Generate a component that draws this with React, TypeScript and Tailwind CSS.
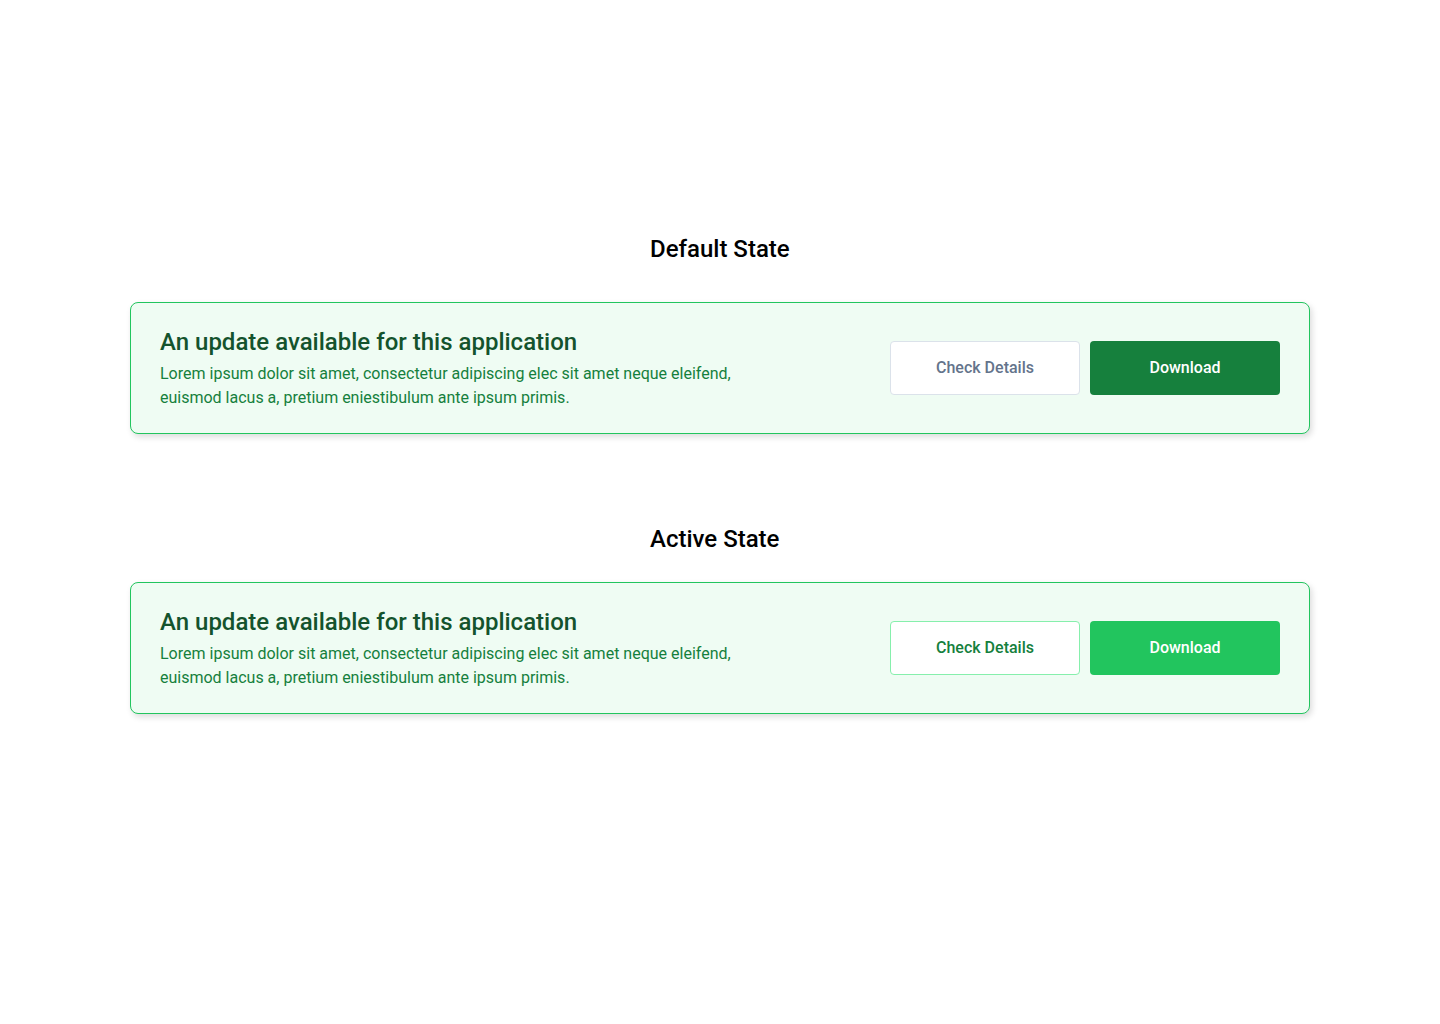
const states = [
  { label: "Default State", active: false, gap: "mt-[37px]" },
  { label: "Active State", active: true, gap: "mt-[27px]" },
];

const UpdateBanner = ({ active }: { active: boolean }) => {
  return (
    <div className="flex items-center justify-between rounded-lg border border-[#22c55e] bg-[#effcf3] px-[29px] pt-[23px] pb-[23px] shadow-[2px_3px_6px_rgba(0,0,0,0.14)]">
      <div className="max-w-[600px]">
        <h2 className="text-[24px] leading-8 font-medium text-[#14532d]">
          An update available for this application
        </h2>
        <p className="mt-1 text-base leading-6 text-[#15803d]">
          Lorem ipsum dolor sit amet, consectetur adipiscing elec sit amet neque eleifend, euismod lacus a, pretium eniestibulum ante ipsum primis.
        </p>
      </div>
      <div className="flex gap-[10px]">
        <button
          className={`h-[54px] w-[190px] rounded border bg-white text-base font-medium ${
            active ? "border-[#86efac] text-[#15803d]" : "border-[#dbe2ea] text-[#64748b]"
          }`}
        >
          Check Details
        </button>
        <button
          className={`h-[54px] w-[190px] rounded text-base font-medium text-white ${
            active ? "bg-[#22c55e]" : "bg-[#16803d]"
          }`}
        >
          Download
        </button>
      </div>
    </div>
  );
};

const App = () => {
  return (
    <div className="min-h-screen bg-white font-['Roboto',sans-serif]">
      <div className="mx-auto w-[1180px] pt-[233px]">
        {states.map((state, index) => (
          <section key={state.label} className={index > 0 ? "mt-[89px]" : ""}>
            <h1 className="ml-[520px] text-[24px] leading-8 font-medium text-black">{state.label}</h1>
            <div className={state.gap}>
              <UpdateBanner active={state.active} />
            </div>
          </section>
        ))}
      </div>
    </div>
  );
};

export default App;
